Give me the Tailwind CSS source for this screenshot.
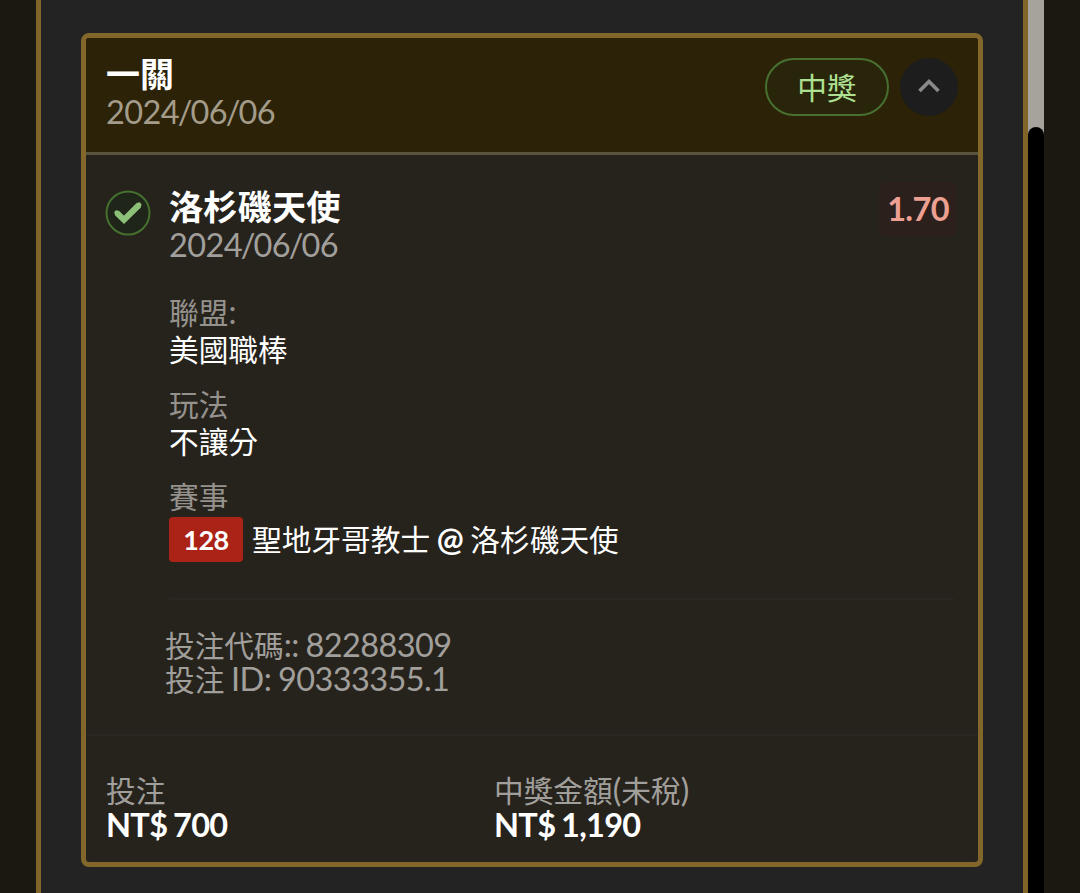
<!DOCTYPE html>
<html lang="zh-Hant">
<head>
  <meta charset="UTF-8">
  <meta name="viewport" content="width=device-width, initial-scale=1.0">
  <title>投注紀錄</title>
  <script src="https://cdn.jsdelivr.net/npm/@tailwindcss/browser@4"></script>
</head>
<body class="bg-[#1b1811] h-[893px] overflow-hidden flex font-[Lato,'Noto_Sans_CJK_TC',sans-serif] text-white">
  <!-- Panel -->
  <main class="ml-9 w-[992px] h-full shrink-0 bg-[#232323] border-x-[5px] border-[#806428] pl-10 pt-[33px]">
    <article class="w-[902px] h-[834px] bg-[#26231d] border-[5px] border-[#82662a] rounded-[8px] flex flex-col overflow-hidden">
      <header class="h-[117px] shrink-0 bg-[#2c2207] border-b-[3px] border-[#5a543f] flex justify-between pl-5 pr-5 pt-[17px]">
        <div>
          <h2 class="text-[34px] leading-[38px] font-bold">一關</h2>
          <p class="mt-px text-[32.5px] leading-9 tracking-[-0.6px] text-[#a39c8a]">2024<span class="-mx-[1.3px]">/</span>06<span class="-mx-[1.3px]">/</span>06</p>
        </div>
        <div class="flex gap-[11px] pt-[3px]">
          <span class="w-[124px] h-[58px] rounded-full border-2 border-[#477030] bg-[#29250a] text-[#aee092] text-[29.7px] leading-[56px] text-center">中獎</span>
          <button class="w-[58px] h-[58px] rounded-full bg-[#1d1d1d] flex items-center justify-center">
            <svg class="w-6 h-6 -mt-1" viewBox="0 0 24 24" fill="none" stroke="#8a8a8a" stroke-width="3.6">
              <path d="M2.5 18 L12 8.5 L21.5 18"/>
            </svg>
          </button>
        </div>
      </header>

      <section class="h-[581px] shrink-0 border-b-2 border-[#292721] flex pl-[19px] pr-[21px] pt-[33px]">
        <svg class="w-[46px] h-[46px] mt-[2px] shrink-0" viewBox="0 0 46 46" fill="none">
          <circle cx="23" cy="23" r="21.5" fill="#20251a" stroke="#467030" stroke-width="2"/>
          <path d="M11.8 22.8 L19 29.8 L34 15" stroke="#8cc078" stroke-width="6"/>
          <path d="M11.8 22.8 L19 29.8 L34 15" stroke="#8cc078" stroke-width="5" stroke-linecap="round"/>
        </svg>
        <div class="flex-1 ml-[18px]">
          <div class="flex justify-between">
            <div>
              <h3 class="text-[34.3px] leading-[38px] font-bold">洛杉磯天使</h3>
              <p class="mt-px text-[32.5px] leading-9 tracking-[-0.6px] text-[#a19f9b]">2024<span class="-mx-[1.3px]">/</span>06<span class="-mx-[1.3px]">/</span>06</p>
            </div>
            <span class="h-[54px] -mt-[6px] px-2 rounded-[6px] bg-[#2b201b] text-[#eda091] text-[32.5px] tracking-[-0.6px] leading-[54px] font-bold">1.70</span>
          </div>

          <dl class="mt-[31px] flex flex-col gap-[18px] text-[29.7px] leading-[37px]">
            <div>
              <dt class="text-[#95928e]">聯盟<span class="text-[32px] leading-none">:</span></dt>
              <dd>美國職棒</dd>
            </div>
            <div>
              <dt class="text-[#95928e]">玩法</dt>
              <dd>不讓分</dd>
            </div>
            <div>
              <dt class="text-[#95928e]">賽事</dt>
              <dd class="mt-[2px] flex leading-[45px]">
                <span class="w-[74px] h-[45px] mr-[9px] rounded-[4px] bg-[#ab2216] text-[27px] tracking-[-0.5px] font-bold text-center">128</span>
                <span>聖地牙哥教士 <span class="-mx-[1px] text-[32px] leading-none font-bold">@</span> 洛杉磯天使</span>
              </dd>
            </div>
          </dl>

          <div class="mt-9 mr-[3px] border-t-2 border-[#292721]"></div>
          <div class="mt-[29px] -ml-1 text-[29.7px] leading-[34px] text-[#a19f9b]">
            <p>投注代碼<span class="text-[32.5px] leading-none tracking-[-0.6px] [word-spacing:-1px]">:: 82288309</span></p>
            <p>投注<span class="text-[32.5px] leading-none tracking-[-0.6px] [word-spacing:-1px]"> ID: 90333355.1</span></p>
          </div>
        </div>
      </section>

      <footer class="flex pl-5 pt-[38px]">
        <div class="w-[388px]">
          <p class="text-[29.7px] leading-[34px] text-[#a19f9b]">投注</p>
          <p class="text-[32.5px] leading-[34px] tracking-[-0.7px] [word-spacing:-1.5px] font-bold">NT$ 700</p>
        </div>
        <div>
          <p class="text-[29.7px] leading-[34px] text-[#a19f9b]">中獎金額<span class="text-[32px] leading-none">(</span>未稅<span class="text-[32px] leading-none">)</span></p>
          <p class="text-[32.5px] leading-[34px] tracking-[-0.7px] [word-spacing:-1.5px] font-bold">NT$ 1,190</p>
        </div>
      </footer>
    </article>
  </main>

  <!-- Scrollbar -->
  <div class="w-4 h-full shrink-0 bg-[#a5a39b] pt-[127px]">
    <div class="h-full bg-black rounded-t-full"></div>
  </div>
</body>
</html>
